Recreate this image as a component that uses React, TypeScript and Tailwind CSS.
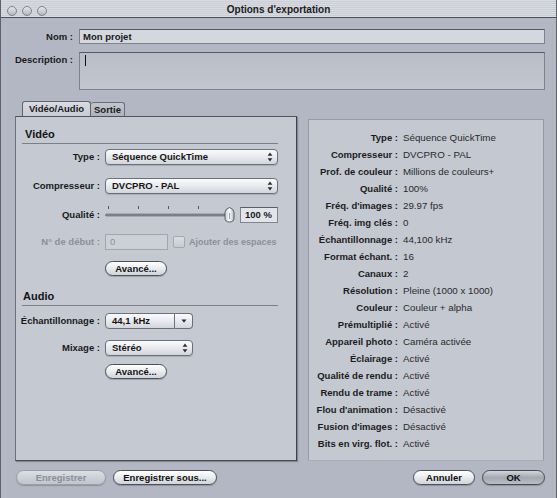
import React from "react";

const FONT = "font-['Liberation_Sans',Arial,sans-serif]";

function PopArrows() {
  return (
    <svg width="6" height="10" viewBox="0 0 6 10" className="shrink-0">
      <path d="M3 0.6 L5.4 3.8 L0.6 3.8 Z" fill="#2a2d33" />
      <path d="M3 9.4 L5.4 6.2 L0.6 6.2 Z" fill="#2a2d33" />
    </svg>
  );
}

function Popup({ text, w }: { text: string; w: string }) {
  return (
    <div
      className={`${w} h-[16px] rounded-[4px] border border-[#6c7079] bg-gradient-to-b from-[#fbfbfc] via-[#e8eaee] to-[#d2d5db] flex items-center justify-between pl-[6px] pr-[4px] shadow-[0_1px_1px_rgba(0,0,0,0.15)]`}
    >
      <span className="text-[9.5px] font-bold text-[#161616] leading-none">{text}</span>
      <PopArrows />
    </div>
  );
}

function Pill({
  text,
  w,
  kind = "normal",
}: {
  text: string;
  w: string;
  kind?: "normal" | "disabled" | "default";
}) {
  const styles =
    kind === "disabled"
      ? "border-[#9a9ea8] text-[#8a8e97] bg-gradient-to-b from-[#dcdfe4] via-[#cdd0d6] to-[#c2c5cc]"
      : kind === "default"
      ? "border-[#474b54] text-[#111] bg-gradient-to-b from-[#d2d5db] via-[#a4a8b1] to-[#b9bdc5]"
      : "border-[#4c5058] text-[#111] bg-gradient-to-b from-[#ffffff] via-[#e9ebee] to-[#d0d3d9]";
  return (
    <div
      className={`${w} h-[15px] rounded-full border flex items-center justify-center text-[9.5px] font-bold leading-none shadow-[0_1px_1px_rgba(0,0,0,0.2)] ${styles}`}
    >
      {text}
    </div>
  );
}

function Label({ children, gray }: { children: React.ReactNode; gray?: boolean }) {
  return (
    <div
      className={`w-[84px] shrink-0 text-right whitespace-nowrap text-[9.5px] font-bold leading-none ${
        gray ? "text-[#8c9099]" : "text-[#1a1a1a]"
      }`}
    >
      {children}
    </div>
  );
}

function Slider() {
  return (
    <svg width="130" height="18" viewBox="0 0 130 18" className="shrink-0 -mt-[2px]">
      <line x1="3.5" y1="1" x2="3.5" y2="4" stroke="#555" strokeWidth="1" />
      <line x1="33.5" y1="1" x2="33.5" y2="4" stroke="#555" strokeWidth="1" />
      <line x1="63.5" y1="1" x2="63.5" y2="4" stroke="#555" strokeWidth="1" />
      <line x1="93.5" y1="1" x2="93.5" y2="4" stroke="#555" strokeWidth="1" />
      <rect x="0.5" y="9" width="122" height="2" rx="1" fill="#8a8e96" stroke="#5a5e66" strokeWidth="0.6" />
      <defs>
        <linearGradient id="thumb" x1="0" y1="0" x2="1" y2="0">
          <stop offset="0" stopColor="#c9ccd2" />
          <stop offset="0.5" stopColor="#fbfbfc" />
          <stop offset="1" stopColor="#b7bac1" />
        </linearGradient>
      </defs>
      <path
        d="M124.5 2.5 Q120 4 120 7.5 L120 13 Q120 17 124.5 17 Q129 17 129 13 L129 7.5 Q129 4 124.5 2.5 Z"
        fill="url(#thumb)"
        stroke="#4b4f57"
        strokeWidth="0.9"
      />
      <line x1="124.5" y1="8" x2="124.5" y2="14" stroke="#8a8e96" strokeWidth="0.8" />
    </svg>
  );
}

const rows: [string, string][] = [
  ["Type :", "Séquence QuickTime"],
  ["Compresseur :", "DVCPRO - PAL"],
  ["Prof. de couleur :", "Millions de couleurs+"],
  ["Qualité :", "100%"],
  ["Fréq. d'images :", "29.97 fps"],
  ["Fréq. img clés :", "0"],
  ["Échantillonnage :", "44,100 kHz"],
  ["Format échant. :", "16"],
  ["Canaux :", "2"],
  ["Résolution :", "Pleine (1000 x 1000)"],
  ["Couleur :", "Couleur + alpha"],
  ["Prémultiplié :", "Activé"],
  ["Appareil photo :", "Caméra activée"],
  ["Éclairage :", "Activé"],
  ["Qualité de rendu :", "Activé"],
  ["Rendu de trame :", "Activé"],
  ["Flou d'animation :", "Désactivé"],
  ["Fusion d'images :", "Désactivé"],
  ["Bits en virg. flot. :", "Activé"],
];

export default function App() {
  return (
    <div
      className={`w-[557px] h-[498px] bg-[#b3b7c3] border-x border-[#5d616a] flex flex-col overflow-hidden ${FONT}`}
    >
      {/* Title bar */}
      <div className="relative h-[18px] shrink-0 border-b border-[#4d5159] bg-[repeating-linear-gradient(0deg,#d7dae0_0px,#d7dae0_1px,#cbced5_1px,#cbced5_2px)] flex items-center justify-center pt-[3px]">
        <div className="absolute left-[6px] top-[6px] flex gap-[5px]">
          <div className="w-[10px] h-[10px] rounded-full border border-[#80848c] bg-gradient-to-b from-[#e4e6ea] to-[#b5b8bf]" />
          <div className="w-[10px] h-[10px] rounded-full border border-[#80848c] bg-gradient-to-b from-[#e4e6ea] to-[#b5b8bf]" />
          <div className="w-[10px] h-[10px] rounded-full border border-[#80848c] bg-gradient-to-b from-[#e4e6ea] to-[#b5b8bf]" />
        </div>
        <span className="text-[10px] font-bold text-[#202020] leading-none">Options d'exportation</span>
      </div>

      {/* Nom */}
      <div className="mt-[11px] flex items-center shrink-0">
        <div className="w-[72px] text-right text-[9.5px] font-bold text-[#1a1a1a] leading-none">Nom :</div>
        <div className="ml-[6px] w-[466px] h-[15px] border border-[#7e828b] border-t-[#555961] bg-[#d4d7de] flex items-center pl-[3px]">
          <span className="text-[9.5px] font-bold text-[#1a1a1a] leading-none">Mon projet</span>
        </div>
      </div>

      {/* Description */}
      <div className="mt-[8px] flex items-start shrink-0">
        <div className="w-[72px] mt-[3px] text-right text-[9.5px] font-bold text-[#1a1a1a] leading-none">Description :</div>
        <div className="ml-[6px] w-[466px] h-[38px] border border-[#7e828b] border-t-[#555961] bg-gradient-to-b from-[#b9bdc7] to-[#c2c6ce] pl-[5px] pt-[2px]">
          <div className="w-px h-[11px] bg-[#111]" />
        </div>
      </div>

      {/* Main */}
      <div className="mt-[11px] flex items-start shrink-0">
        {/* Left column */}
        <div className="ml-[14px] w-[282px] flex flex-col">
          <div className="h-[15px] flex pl-[7px] items-end">
            <div className="w-[69px] h-[15px] rounded-t-[3px] border border-b-0 border-[#5f636c] bg-gradient-to-b from-[#d8dbe1] to-[#c7cbd4] flex items-center justify-center text-[9.5px] font-bold text-[#1a1a1a] leading-none">
              Vidéo/Audio
            </div>
            <div className="w-[34px] h-[14px] rounded-t-[3px] border border-b-0 border-l-0 border-[#6a6e77] bg-gradient-to-b from-[#c2c6ce] to-[#aeb2bc] flex items-center justify-center text-[9.5px] font-bold text-[#1a1a1a] leading-none">
              Sortie
            </div>
          </div>
          <div className="h-[345px] border border-[#6b6f78] border-t-[#50545c] border-r-[#3d4149] border-b-[#454952] bg-[#c5c9d2] shadow-[1px_1px_1px_rgba(0,0,0,0.25)] flex flex-col">
            <div className="mt-[10px] ml-[9px] h-[14px] flex items-center text-[11px] font-bold text-[#141414] leading-none">Vidéo</div>
            <div className="mt-[2px] ml-[6px] w-[256px] h-px bg-[#7b7f88]" />

            <div className="mt-[5px] h-[16px] flex items-center">
              <Label>Type :</Label>
              <div className="ml-[5px]">
                <Popup text="Séquence QuickTime" w="w-[173px]" />
              </div>
            </div>
            <div className="mt-[13px] h-[16px] flex items-center">
              <Label>Compresseur :</Label>
              <div className="ml-[5px]">
                <Popup text="DVCPRO - PAL" w="w-[173px]" />
              </div>
            </div>
            <div className="mt-[13px] h-[16px] flex items-center">
              <Label>Qualité :</Label>
              <div className="ml-[5px] flex items-center">
                <Slider />
                <div className="ml-[5px] w-[38px] h-[16px] border border-[#80848d] border-t-[#5a5e66] bg-[#e2e4e9] flex items-center pl-[4px] text-[9.5px] font-bold text-[#1a1a1a] leading-none">
                  100 %
                </div>
              </div>
            </div>
            <div className="mt-[11px] h-[16px] flex items-center">
              <Label gray>N° de début :</Label>
              <div className="ml-[5px] w-[63px] h-[16px] border border-[#a2a6af] bg-[#ccd0d7] flex items-center pl-[4px] text-[9.5px] text-[#8c9099] leading-none">
                0
              </div>
              <div className="ml-[5px] w-[12px] h-[12px] rounded-[2px] border border-[#a3a7b0] bg-gradient-to-b from-[#dadde2] to-[#c9ccd3]" />
              <div className="ml-[4px] whitespace-nowrap text-[9px] font-bold text-[#8c9099] leading-none">
                Ajouter des espaces
              </div>
            </div>
            <div className="mt-[11px] ml-[89px]">
              <Pill text="Avancé..." w="w-[62px]" />
            </div>

            <div className="mt-[13px] ml-[7px] h-[14px] flex items-center text-[11px] font-bold text-[#141414] leading-none">Audio</div>
            <div className="mt-[2px] ml-[6px] w-[256px] h-px bg-[#7b7f88]" />

            <div className="mt-[7px] h-[16px] flex items-center">
              <Label>Échantillonnage :</Label>
              <div className="ml-[5px] flex">
                <div className="w-[70px] h-[16px] rounded-l-[4px] border border-[#6c7079] bg-gradient-to-b from-[#fbfbfc] via-[#e8eaee] to-[#d2d5db] flex items-center pl-[6px] text-[9.5px] font-bold text-[#161616] leading-none">
                  44,1 kHz
                </div>
                <div className="w-[18px] h-[16px] rounded-r-[4px] border border-l-0 border-[#6c7079] bg-gradient-to-b from-[#fbfbfc] via-[#e8eaee] to-[#d2d5db] flex items-center justify-center">
                  <svg width="6" height="4" viewBox="0 0 6 4">
                    <path d="M0.5 0.5 L5.5 0.5 L3 3.8 Z" fill="#2a2d33" />
                  </svg>
                </div>
              </div>
            </div>
            <div className="mt-[11px] h-[16px] flex items-center">
              <Label>Mixage :</Label>
              <div className="ml-[5px]">
                <Popup text="Stéréo" w="w-[88px]" />
              </div>
            </div>
            <div className="mt-[8px] ml-[89px]">
              <Pill text="Avancé..." w="w-[62px]" />
            </div>
          </div>
        </div>

        {/* Right column */}
        <div className="ml-[11px] mt-[18px] w-[236px] h-[342px] border border-[#979ba5] border-b-[#a9adb6] bg-[#c4c8d1] pt-[9px] flex flex-col">
          {rows.map(([k, v]) => (
            <div key={k} className="h-[17px] flex items-center">
              <div className="w-[89px] shrink-0 text-right whitespace-nowrap text-[9.5px] font-bold text-[#1c1c1c] leading-none">
                {k}
              </div>
              <div className="pl-[5px] whitespace-nowrap text-[9.75px] text-[#2a2a2a] leading-none">{v}</div>
            </div>
          ))}
        </div>
      </div>

      {/* Bottom buttons */}
      <div className="mt-[9px] flex items-center shrink-0">
        <div className="ml-[15px] flex gap-[7px]">
          <Pill text="Enregistrer" w="w-[90px]" kind="disabled" />
          <Pill text="Enregistrer sous..." w="w-[104px]" />
        </div>
        <div className="ml-auto mr-[11px] flex gap-[7px]">
          <Pill text="Annuler" w="w-[62px]" />
          <Pill text="OK" w="w-[63px]" kind="default" />
        </div>
      </div>
    </div>
  );
}
